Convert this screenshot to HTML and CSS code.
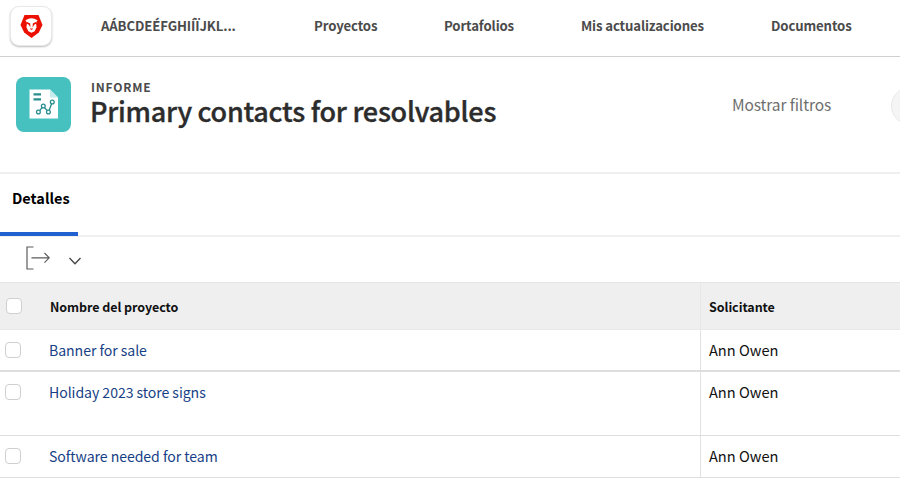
FILE: index.html
```html
<!DOCTYPE html>
<html lang="es">
<head>
<meta charset="utf-8">
<title>Primary contacts for resolvables</title>
<link rel="stylesheet" href="styles.css">
</head>
<body>
<header class="topbar">
  <div class="logo">
    <svg width="23" height="24" viewBox="0 0 23 24">
      <path d="M4.500 1h14L22.500 11 18.800 18.500 11.500 24 4.200 18.500.5 11z" fill="#eb1000"/>
      <path d="M5.500 6.200 8.500 4.700 11.500 4.200 14.500 4.700 17.500 6.200 16 9.500 16.600 13.200 14.600 17.300 11.500 18.800 8.400 17.300 6.400 13.200 7 9.500z" fill="#fff"/>
      <path d="M6.200 7.400 10.200 9.400 10.400 13.500 8.800 10.700 7 9.700zM16.800 7.400 12.800 9.400 12.600 13.500 14.200 10.700 16 9.700zM9.800 14.400h3.400L12 15.800h-1z" fill="#eb1000"/>
    </svg>
  </div>
  <nav class="nav">
    <a class="w1">AÁBCDEÉFGHIÍÏJKL...</a>
    <a class="w2">Proyectos</a>
    <a class="w3">Portafolios</a>
    <a class="w4">Mis actualizaciones</a>
    <a class="w5">Documentos</a>
  </nav>
</header>
<section class="title-area">
  <div class="report-icon">
    <svg width="55" height="55" viewBox="0 0 55 55" fill="none">
      <path d="M13.500 12.500h20.500l8 8v21H13.500z" fill="#fff"/>
      <path d="M34 12.500l8 8h-8z" fill="#c5ecec"/>
      <path d="M17.500 17.400h7.500M17.500 22.400h7.500" stroke="#298d8f" stroke-width="2.200"/>
      <path d="M23.600 33.800 26.300 30.200M28.200 30.400 31.200 33.500M33.200 33.200 35.600 26.700" stroke="#298d8f" stroke-width="1.300"/>
      <g stroke="#298d8f" stroke-width="1.300"><circle cx="22.400" cy="35" r="1.900"/><circle cx="27.300" cy="29" r="1.900"/><circle cx="32.400" cy="35" r="1.900"/><circle cx="36.300" cy="25" r="1.900"/></g>
    </svg>
  </div>
  <div class="heading">
    <div class="kind">INFORME</div>
    <h1>Primary contacts for resolvables</h1>
  </div>
  <a class="filters">Mostrar filtros</a>
  <span class="round-button"></span>
</section>
<div class="tabs"><a class="tab"><span>Detalles</span></a></div>
<div class="toolbar">
  <svg width="24" height="24" viewBox="0 0 24 24" fill="none" stroke="#5c5c5c" stroke-width="1.200"><path d="M7.500 1H1v22h6.500M5.500 11.800H23M18.500 7l4.700 4.800-4.700 4.800"/></svg>
  <svg class="chevron" width="12" height="8" viewBox="0 0 12 8" fill="none" stroke="#444" stroke-width="1.300"><path d="M.5 1 6 6.800 11.500 1"/></svg>
</div>
<main class="grid">
  <div class="row head"><div class="cell name"><i class="box"></i><b class="project">Nombre del proyecto</b></div><div class="cell"><b class="requester">Solicitante</b></div></div>
  <div class="row first"><div class="cell name"><i class="box"></i><a>Banner for sale</a></div><div class="cell"><span>Ann Owen</span></div></div>
  <div class="row tall"><div class="cell name"><i class="box"></i><a>Holiday 2023 store signs</a></div><div class="cell"><span>Ann Owen</span></div></div>
  <div class="row last"><div class="cell name"><i class="box"></i><a>Software needed for team</a></div><div class="cell"><span>Ann Owen</span></div></div>
</main>
</body>
</html>
```
FILE: styles.css
```css
* { box-sizing: border-box; }
body { margin: 0; width: 900px; height: 480px; overflow: hidden; background: #fff; color: #111; font-family: "Noto Sans CJK JP", "Noto Sans", sans-serif; font-size: 15px; line-height: 20px; white-space: nowrap; }
.topbar { display: flex; height: 57px; border-bottom: 1px solid #d0d0d0; padding: 6px 0 0 10px; }
.logo { width: 42px; height: 40px; border-radius: 9px; border: 1px solid #e9e9e9; box-shadow: 0 1px 2px #0004; padding: 7px 0 0 9px; background: #fff; }
.logo svg { display: block; }
.nav { display: flex; margin-left: 49px; padding-top: 10px; font-size: 13.2px; letter-spacing: -.13px; font-weight: 700; color: #4b4b4b; }
.w1 { width: 213px; }
.w2 { width: 130px; }
.w3 { width: 137px; }
.w4 { width: 190px; }
.title-area { display: flex; height: 117px; border-bottom: 2px solid #efefef; padding: 20px 0 0 16px; }
.report-icon { flex: none; width: 55px; height: 55px; border-radius: 8px; background: #47c1bf; }
.report-icon svg { display: block; }
.heading { flex: none; width: 661px; padding-left: 20px; }
.kind { font-size: 12px; font-weight: 700; letter-spacing: .8px; line-height: 20px; color: #4b4b4b; }
h1 { margin: -1px 0 0 -1px; font-size: 27px; line-height: 30px; font-weight: 500; letter-spacing: -.26px; color: #2c2c2c; -webkit-text-stroke: .35px #2c2c2c; }
.filters { flex: none; width: 159px; padding-top: 17px; font-size: 15.5px; letter-spacing: -.1px; color: #6e6e6e; }
.round-button { flex: none; width: 38px; height: 38px; margin-top: 10px; border-radius: 50%; border: 1px solid #e9e9e9; background: #f5f5f5; }
.tabs { height: 63px; border-bottom: 2px solid #f0f0f0; }
.tab { display: block; width: 78px; height: 62px; border-bottom: 4px solid #2160cf; padding: 14px 0 0 12px; font-size: 14.5px; font-weight: 700; color: #000; }
.toolbar { display: flex; height: 45px; padding: 9px 0 0 26px; }
.chevron { margin: 11px 0 0 19px; }
.row { display: flex; border-bottom: 1px solid #dedede; }
.cell { flex: 1; border-left: 1px solid #e2e2e2; padding: 10px 0 0 8px; font-size: 14.6px; color: #111; }
.cell.name { display: flex; flex: none; width: 700px; border-left: 0; padding-left: 5px; }
.name a { color: #173f86; margin-left: 28px; font-size: 14.1px; letter-spacing: -.06px; }
.box { width: 16px; height: 16px; border: 1px solid #cfcfcf; border-radius: 4px; background: #fff; margin-top: 2px; }
.head { height: 48px; border-top: 1px solid #e5e5e5; border-bottom-color: #e8e8e8; background: #efefef; }
.head .cell { padding-top: 14px; border-left-color: #e6e6e6; font-size: 12.5px; letter-spacing: -.06px; }
.head .name { padding-left: 6px; }
.head .box { margin-top: 1px; }
.project { margin-left: 28px; }
.first { height: 42px; border-bottom-width: 2px; }
.tall { height: 64px; }
.last { height: 42px; }
```
